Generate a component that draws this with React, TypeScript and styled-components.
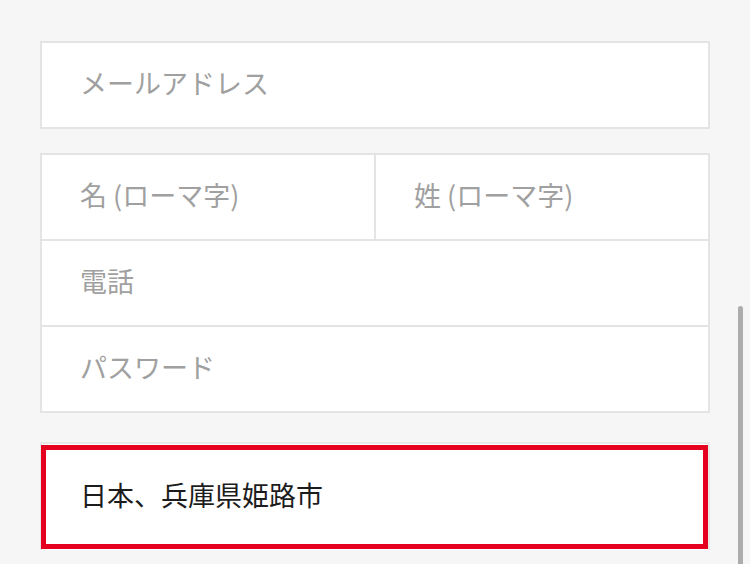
import styled, { createGlobalStyle } from 'styled-components';

const Global = createGlobalStyle`
  html, body {
    margin: 0;
    padding: 0;
    background: #f6f6f6;
    overflow: hidden;
  }
  body {
    font-family: "Noto Sans CJK JP", "Noto Sans", sans-serif;
  }
`;

const Page = styled.div`
  position: relative;
  height: 564px;
  padding: 41px 40px 0 40px;
  box-sizing: border-box;
  display: flex;
  flex-direction: column;
`;

const Card = styled.div<{ $gap?: number }>`
  background: #fff;
  border: 2px solid #e4e4e4;
  display: flex;
  flex-direction: column;
  margin-top: ${(p) => p.$gap ?? 0}px;
`;

const Row = styled.div`
  display: flex;
  height: 84px;
  & + & {
    border-top: 2px solid #e4e4e4;
  }
`;

const Cell = styled.div`
  flex: 1;
  display: flex;
  align-items: center;
  padding: 0 0 6px 38px;
  font-size: 27px;
  color: #a0a0a0;
  white-space: pre;
  & + & {
    border-left: 2px solid #e4e4e4;
  }
`;

const AddressField = styled.div`
  position: relative;
  margin-top: 29px;
  background: #fff;
  border-top: 2px solid #e8e8e8;
  border-left: 2px solid #e8e8e8;
  border-right: 2px solid #e8e8e8;
  height: 106px;
`;

const Highlight = styled.div`
  position: absolute;
  top: 1px;
  left: -1px;
  right: 0px;
  height: 104px;
  box-sizing: border-box;
  border: 5px solid #e60020;
  display: flex;
  align-items: center;
  padding: 0 0 5px 34px;
  font-size: 27px;
  color: #1c1c1c;
`;

const Scrollbar = styled.div`
  position: absolute;
  left: 738px;
  top: 306px;
  width: 5px;
  height: 270px;
  border-radius: 3px 3px 0 0;
  background: #acacac;
`;

export default function App() {
  return (
    <>
      <Global />
      <Page>
        <Card>
          <Row>
            <Cell>メールアドレス</Cell>
          </Row>
        </Card>
        <Card $gap={24}>
          <Row>
            <Cell>名 (ローマ字)</Cell>
            <Cell>姓 (ローマ字)</Cell>
          </Row>
          <Row>
            <Cell>電話</Cell>
          </Row>
          <Row>
            <Cell>パスワード</Cell>
          </Row>
        </Card>
        <AddressField>
          <Highlight>日本、兵庫県姫路市</Highlight>
        </AddressField>
        <Scrollbar />
      </Page>
    </>
  );
}
